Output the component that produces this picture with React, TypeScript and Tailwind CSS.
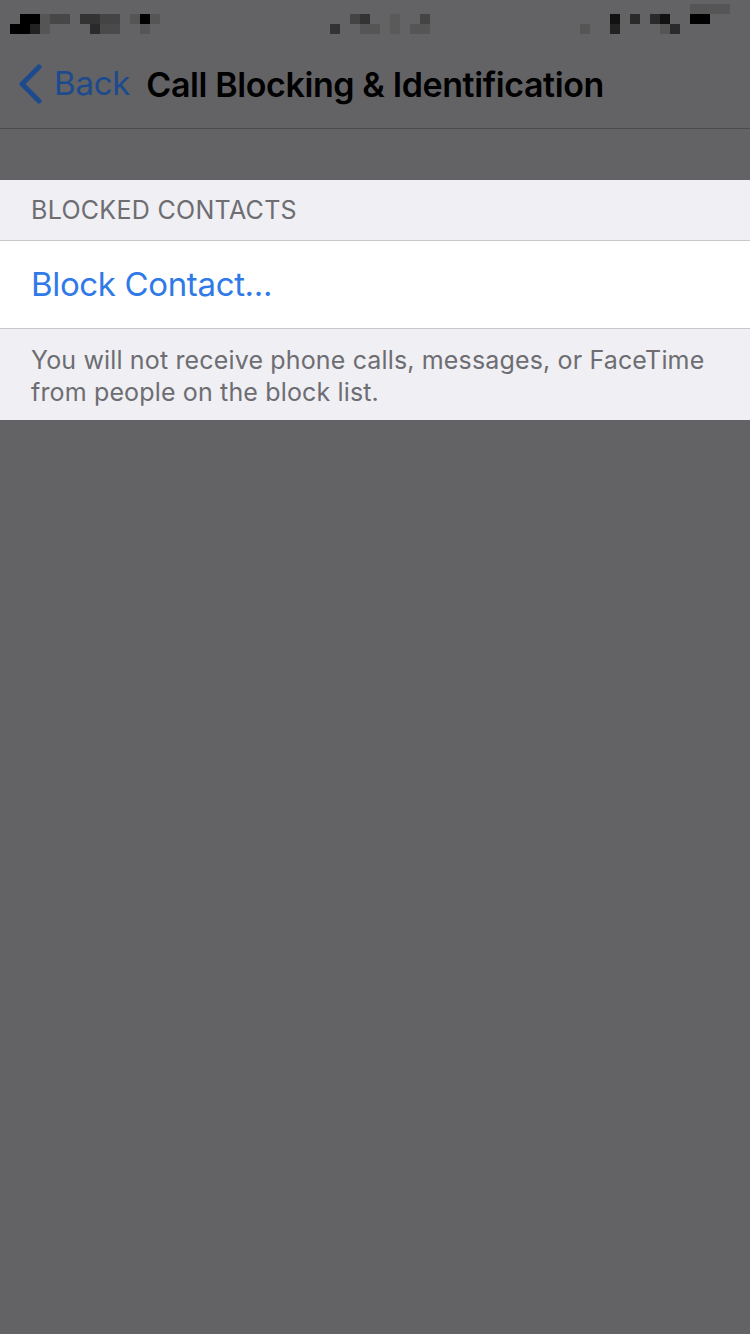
import React from "react";

// pixelated status bar blocks: [x, y, w, h, colour]
const statusBlocks: [number, number, number, number, string][] = [
  [10, 24, 10, 10, "#000"],
  [20, 14, 20, 20, "#000"],
  [30, 24, 10, 10, "#222"],
  [40, 14, 10, 20, "#555"],
  [50, 14, 20, 10, "#474747"],
  [80, 14, 20, 10, "#333"],
  [100, 14, 20, 10, "#444"],
  [90, 24, 10, 10, "#2a2a2a"],
  [100, 24, 20, 10, "#4a4a4a"],
  [130, 14, 10, 10, "#555"],
  [140, 14, 10, 10, "#000"],
  [150, 14, 10, 10, "#555"],
  [140, 24, 10, 10, "#555"],
  [330, 24, 10, 10, "#333"],
  [350, 14, 10, 10, "#444"],
  [360, 14, 10, 10, "#333"],
  [360, 24, 20, 10, "#555"],
  [390, 14, 10, 20, "#5a5a5a"],
  [410, 24, 20, 10, "#555"],
  [420, 14, 10, 10, "#444"],
  [580, 24, 10, 10, "#555"],
  [610, 14, 10, 10, "#111"],
  [610, 24, 10, 10, "#222"],
  [630, 14, 10, 10, "#2a2a2a"],
  [650, 14, 10, 10, "#2a2a2a"],
  [660, 14, 10, 10, "#111"],
  [660, 24, 10, 10, "#555"],
  [670, 24, 10, 10, "#2a2a2a"],
  [690, 4, 40, 10, "#555"],
  [690, 14, 20, 10, "#000"],
];

const font = { fontFamily: "Inter, 'Liberation Sans', sans-serif" };

export default function App() {
  return (
    <div className="w-[750px] h-[1334px] bg-[#636365] flex flex-col" style={font}>
      {/* status bar */}
      <div className="h-[40px] w-full">
        <svg width="750" height="40" viewBox="0 0 750 40">
          {statusBlocks.map(([x, y, w, h, c], i) => (
            <rect key={i} x={x} y={y} width={w} height={h} fill={c} />
          ))}
        </svg>
      </div>

      {/* nav bar */}
      <div className="h-[88px] flex items-center border-b border-[#4b4b4d] box-content">
        <div className="flex items-center pl-[17px] text-[#1d4a8c]">
          <svg width="26" height="40" viewBox="0 0 26 40" fill="none">
            <path d="M22 3 L5 20 L22 37" stroke="#1d4a8c" strokeWidth="5" strokeLinecap="round" strokeLinejoin="round" />
          </svg>
          <span className="ml-[11px] text-[33px] tracking-[-0.2px]">Back</span>
        </div>
        <span className="ml-[16px] text-[34px] font-semibold text-black tracking-[-0.4px]">
          Call Blocking &amp; Identification
        </span>
      </div>

      <div className="h-[51px]" />

      {/* blocked contacts group */}
      <div className="bg-[#efeff4]">
        <div className="h-[60px] flex items-center pl-[31px] pt-[2px] text-[25px] text-[#6d6d72] tracking-[0.3px]">
          BLOCKED CONTACTS
        </div>
        <div className="h-[89px] bg-white border-y border-[#c8c7cc] flex items-center pl-[31px] text-[33px] text-[#2f7ae6] tracking-[-0.35px]">
          Block Contact...
        </div>
        <div className="pl-[31px] pr-[20px] pt-[15px] pb-[12px] text-[25px] leading-[32px] text-[#6d6d72] tracking-[0.15px]">
          You will not receive phone calls, messages, or FaceTime from people on the block list.
        </div>
      </div>
    </div>
  );
}
